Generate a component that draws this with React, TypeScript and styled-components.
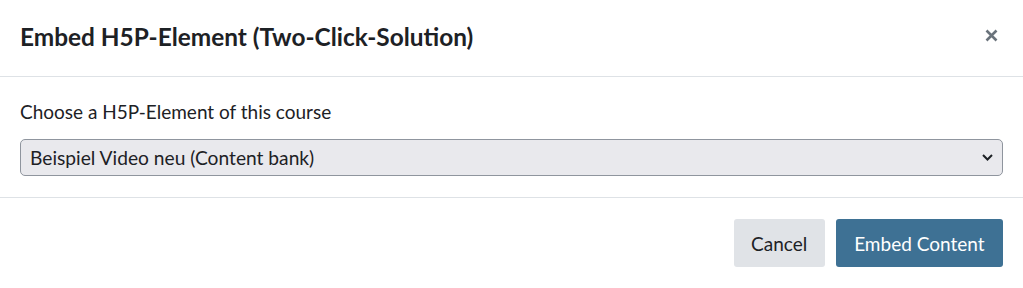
import React from "react";
import styled, { createGlobalStyle } from "styled-components";

const Global = createGlobalStyle`
  html, body { margin: 0; padding: 0; background: #ffffff; }
  body { font-family: Lato, "Liberation Sans", sans-serif; color: #1d2125; }
  * { box-sizing: border-box; }
`;

const Modal = styled.div`
  width: 1023px;
  height: 288px;
  display: flex;
  flex-direction: column;
  background: #fff;
`;

const Header = styled.div`
  height: 79px;
  padding: 0 20px;
  display: flex;
  align-items: center;
  justify-content: space-between;
  border-bottom: 1px solid #dee2e6;
`;

const Title = styled.h5`
  margin: 0 0 1px;
  font-size: 24.4px;
  font-weight: 700;
  line-height: 28.8px;
  color: #1d2125;
`;

const CloseButton = styled.button`
  border: 0;
  background: transparent;
  padding: 0;
  width: 14px;
  height: 14px;
  margin: 0 5px 5px 0;
  display: flex;
  align-items: center;
  justify-content: center;
  cursor: pointer;
`;

const Body = styled.div`
  padding: 21px 20px 21px;
  border-bottom: 1px solid #dee2e6;
  display: flex;
  flex-direction: column;
`;

const Label = styled.label`
  font-size: 19px;
  line-height: 28px;
  margin-bottom: 13px;
  color: #1d2125;
`;

const SelectBox = styled.div`
  height: 37px;
  border: 1px solid #8f959e;
  border-radius: 5px;
  background: #e9e9ed;
  display: flex;
  align-items: center;
  justify-content: space-between;
  padding: 0 9px 0 9px;
  font-size: 19.2px;
  color: #1d2125;
`;

const Footer = styled.div`
  padding: 21px 20px;
  display: flex;
  justify-content: flex-end;
  gap: 11px;
`;

const Button = styled.button<{ $primary?: boolean }>`
  height: 48px;
  padding: 0 ${(p) => (p.$primary ? "18.5px" : "17.5px")};
  border: 0;
  border-radius: 3px;
  font-family: inherit;
  font-size: 19px;
  background: ${(p) => (p.$primary ? "#3e7194" : "#e0e3e7")};
  color: ${(p) => (p.$primary ? "#ffffff" : "#1d2125")};
  cursor: pointer;
`;

export default function App() {
  return (
    <>
      <Global />
      <Modal>
        <Header>
          <Title>Embed H5P-Element (Two-Click-Solution)</Title>
          <CloseButton aria-label="Close">
            <svg width="13" height="13" viewBox="0 0 13 13">
              <path d="M1.5 1.5 L11.5 11.5 M11.5 1.5 L1.5 11.5" stroke="#6a737b" strokeWidth="2.6" />
            </svg>
          </CloseButton>
        </Header>
        <Body>
          <Label>Choose a H5P-Element of this course</Label>
          <SelectBox>
            <span>Beispiel Video neu (Content bank)</span>
            <svg width="11" height="7" viewBox="0 0 11 7">
              <path d="M1 1 L5.5 5.5 L10 1" stroke="#1d2125" strokeWidth="2" fill="none" />
            </svg>
          </SelectBox>
        </Body>
        <Footer>
          <Button>Cancel</Button>
          <Button $primary>Embed Content</Button>
        </Footer>
      </Modal>
    </>
  );
}
